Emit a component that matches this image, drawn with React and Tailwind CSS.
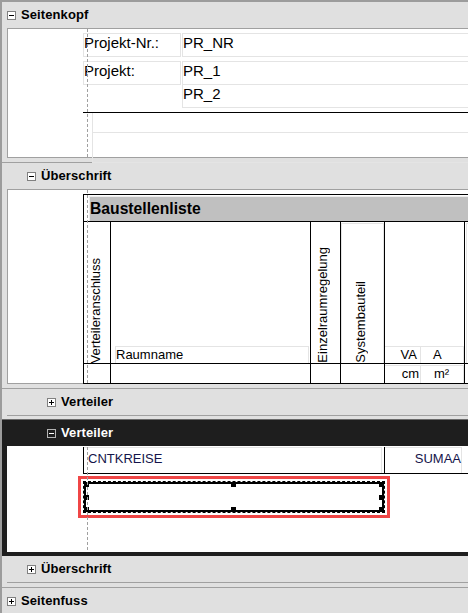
import React from "react";

const LG = "border-[#e4e4e4]";

function Toggle({ open, dark }) {
  const line = dark ? "#ffffff" : "#000000";
  return (
    <svg width="9" height="9" viewBox="0 0 9 9" className="shrink-0 block">
      <rect x="0.5" y="0.5" width="8" height="8" fill={dark ? "#1e1e1e" : "#ffffff"} stroke={dark ? "#b4b4b4" : "#808080"} />
      <path d="M2 4.5h5" stroke={line} />
      {!open && <path d="M4.5 2v5" stroke={line} />}
    </svg>
  );
}

function Header({ level, open, dark, title }) {
  const pad = level === 0 ? "pl-[5px]" : level === 1 ? "pl-[25px]" : "pl-[45px]";
  return (
    <div className={`h-[26px] flex items-center ${pad} ${dark ? "text-white" : "text-black"}`}>
      <Toggle open={open} dark={dark} />
      <span className="ml-[5px] text-[13px] font-bold leading-[26px] tracking-[0.1px]">{title}</span>
    </div>
  );
}

function Guide() {
  return (
    <div className="pointer-events-none absolute left-[79px] top-0 bottom-0 w-px bg-[repeating-linear-gradient(to_bottom,#a0a0a0_0px,#a0a0a0_3px,transparent_3px,transparent_5px)]" />
  );
}

function VText({ children }) {
  return (
    <div className="[writing-mode:vertical-rl] rotate-180 text-[13px] leading-[15px] whitespace-nowrap">{children}</div>
  );
}

function Handle({ className }) {
  return <div className={`absolute w-[5px] h-[5px] bg-black ${className}`} />;
}

export default function App() {
  return (
    <div className="w-[468px] h-[613px] overflow-hidden bg-[#e0e0e0] border-t-2 border-l-2 border-[#9c9c9c] font-['Liberation_Sans',Arial,sans-serif] text-black">
      {/* Seitenkopf */}
      <Header level={0} open title="Seitenkopf" />
      <div className="relative ml-[5px] w-[700px] h-[130px] border border-[#a0a0a0] bg-white mb-[4px]">
        <div className="pl-[75px] pt-[4px]">
          <div className="flex">
            <div className={`shrink-0 w-[98px] h-[24px] border ${LG} text-[15px] leading-[18px]`}>Projekt-Nr.:</div>
            <div className={`shrink-0 ml-px w-[600px] h-[24px] border ${LG} text-[15px] leading-[18px]`}>PR_NR</div>
          </div>
          <div className="flex mt-[4px]">
            <div className={`shrink-0 w-[98px] h-[24px] border ${LG} text-[15px] leading-[18px]`}>Projekt:</div>
            <div className="shrink-0 ml-px w-[600px] flex flex-col">
              <div className={`h-[24px] border ${LG} text-[15px] leading-[18px]`}>PR_1</div>
              <div className={`h-[23px] border-x border-b ${LG} text-[15px] leading-[18px]`}>PR_2</div>
            </div>
          </div>
          <div className="mt-[4px] h-px w-[700px] bg-black" />
          <div className="pl-[9px]">
            <div className={`h-[20px] border-l border-b ${LG}`} />
            <div className={`h-[30px] border-l border-b ${LG}`} />
          </div>
        </div>
        <Guide />
      </div>
      <div className="h-px bg-[#a0a0a0]" />

      {/* Überschrift */}
      <Header level={1} open title="Überschrift" />
      <div className="relative ml-[5px] w-[700px] h-[195px] border border-[#a0a0a0] bg-white mb-[4px]">
        <div className="pl-[75px] pt-[4px]">
          <div className="w-[650px] border-t border-l border-black">
            <div className="h-[27px] border-b border-black pl-[5px] pt-[1px]">
              <div className="h-[25px] border-t border-l border-[#eeeeee] bg-[#c0c0c0] text-[15.7px] font-bold leading-[23px]">Baustellenliste</div>
            </div>
            <div className="flex h-[142px] border-b border-black">
              <div className="shrink-0 w-[27px] border-r border-black flex items-end pl-[4px]">
                <VText>Verteileranschluss</VText>
              </div>
              <div className="shrink-0 w-[200px] border-r border-black flex items-end pl-[4px] pr-[1px]">
                <div className={`w-full h-[17px] border-t border-x ${LG} text-[13px] leading-[15px]`}>Raumname</div>
              </div>
              <div className="shrink-0 w-[30px] border-r border-black flex items-end pl-[4px]">
                <VText>Einzelraumregelung</VText>
              </div>
              <div className="shrink-0 w-[44px] border-r border-black pt-[1px]">
                <div className={`h-full border-t border-x ${LG} flex items-end pl-[11px]`}>
                  <VText>Systembauteil</VText>
                </div>
              </div>
              <div className="shrink-0 w-[80px] border-r border-black flex items-end">
                <div className={`shrink-0 w-[36px] h-[17px] border-t border-r ${LG} text-[13px] leading-[15px] text-right pr-[3px]`}>VA</div>
                <div className={`shrink-0 w-[43px] h-[17px] border-t border-r ${LG} text-[13px] leading-[15px] pl-[12px]`}>A</div>
              </div>
              <div className="flex-1 pl-[1px] pt-[1px]">
                <div className={`h-full border-t border-l ${LG}`} />
              </div>
            </div>
            <div className="flex h-[20px] border-b border-black">
              <div className="shrink-0 w-[27px] border-r border-black" />
              <div className="shrink-0 w-[200px] border-r border-black" />
              <div className="shrink-0 w-[30px] border-r border-black" />
              <div className="shrink-0 w-[44px] border-r border-black" />
              <div className="shrink-0 w-[80px] border-r border-black flex pt-[1px]">
                <div className={`shrink-0 w-[36px] h-full border-t border-r ${LG} text-[13px] leading-[15px] text-right pr-[1px]`}>cm</div>
                <div className={`shrink-0 w-[43px] h-full border-t border-r ${LG} text-[13px] leading-[15px] pl-[13px]`}>m²</div>
              </div>
              <div className="flex-1" />
            </div>
          </div>
        </div>
        <Guide />
      </div>
      <div className="h-px bg-[#a0a0a0]" />

      {/* Verteiler collapsed */}
      <Header level={2} title="Verteiler" />
      <div className="ml-[5px] h-px bg-[#a0a0a0]" />
      <div className="h-[3px]" />

      {/* Verteiler selected */}
      <div className="bg-[#1e1e1e] border-t border-[#6a6a6a] pb-[4px]">
        <Header level={2} open dark title="Verteiler" />
        <div className="relative ml-[5px] w-[700px] h-[106px] border border-white bg-white">
          <div className="pl-[75px]">
            <div className="flex h-[27px] w-[650px] border-l border-b border-black">
              <div className="shrink-0 w-[301px] border-r border-black">
                <div className={`w-[298px] h-full border-t border-r ${LG} pl-[4px] text-[13px] leading-[21px] text-[#14144a]`}>CNTKREISE</div>
              </div>
              <div className={`shrink-0 w-[77px] h-full border-t border-r ${LG} text-right text-[13px] leading-[21px] text-[#14144a]`}>SUMAA</div>
            </div>
          </div>
          <div className="pl-[70px] pt-[2px]">
            <div className="w-[312px] h-[42px] border-[3px] border-[#f04646] p-[2px]">
              <div className="relative h-full border border-dashed border-black">
                <div className="h-full border-2 border-black" />
                <Handle className="left-0 top-0" />
                <Handle className="left-[147px] top-0" />
                <Handle className="right-0 top-0" />
                <Handle className="left-0 top-[13px]" />
                <Handle className="right-0 top-[13px]" />
                <Handle className="left-0 bottom-0" />
                <Handle className="left-[147px] bottom-0" />
                <Handle className="right-0 bottom-0" />
              </div>
            </div>
          </div>
          <Guide />
        </div>
      </div>

      {/* Überschrift collapsed */}
      <Header level={1} title="Überschrift" />
      <div className="ml-[5px] h-px bg-[#a0a0a0]" />
      <div className="h-[4px]" />
      <div className="h-px bg-[#a0a0a0]" />

      {/* Seitenfuss */}
      <Header level={0} title="Seitenfuss" />
    </div>
  );
}
